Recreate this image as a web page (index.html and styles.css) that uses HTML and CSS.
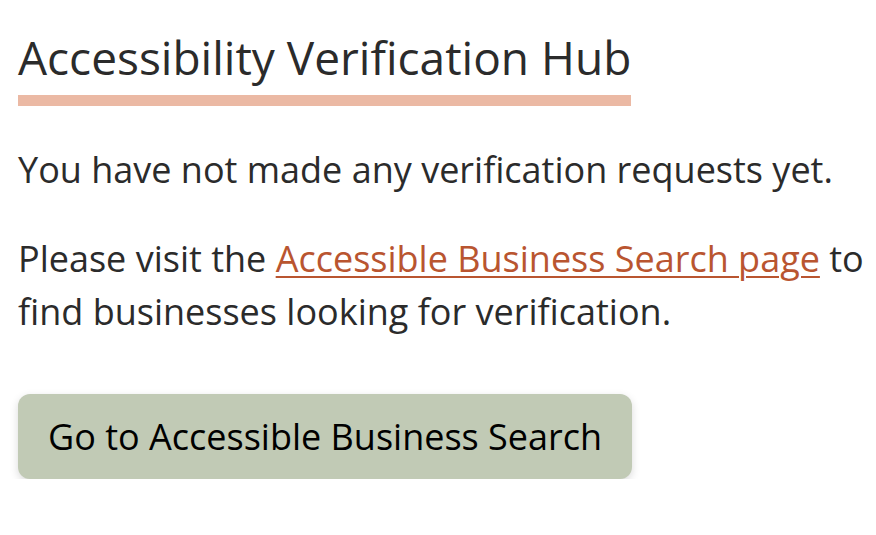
FILE: index.html
```html
<!DOCTYPE html>
<html lang="en">
<head>
<meta charset="utf-8">
<title>Accessibility Verification Hub</title>
<link rel="stylesheet" href="styles.css">
</head>
<body>
<main class="hub">
  <h1 class="hub-title">Accessibility Verification Hub</h1>
  <p class="hub-text">You have not made any verification requests yet.</p>
  <p class="hub-text">Please visit the <a class="hub-link" href="#">Accessible Business Search page</a> to find businesses looking for verification.</p>
  <a class="hub-button" href="#">Go to Accessible Business Search</a>
</main>
</body>
</html>
```
FILE: styles.css
```css
html, body {
  margin: 0;
  padding: 0;
  background: #ffffff;
}
body {
  font-family: "Open Sans", "Noto Sans", sans-serif;
  color: #2b2b2b;
}
.hub {
  padding: 27px 6px 0 18px;
  display: flex;
  flex-direction: column;
  align-items: flex-start;
}
.hub-title {
  font-size: 46px;
  font-weight: 400;
  line-height: 60px;
  margin: 0 0 37px 0;
  padding-bottom: 8px;
  border-bottom: 11px solid #ebb9a4;
}
.hub-text {
  font-size: 36px;
  line-height: 53px;
  margin: 0 0 36px 0;
}
.hub-link {
  color: #b95530;
  text-decoration: underline;
  text-decoration-thickness: 2px;
  text-underline-offset: 4px;
}
.hub-button {
  display: inline-block;
  background: #c1cab5;
  color: #000000;
  text-decoration: none;
  font-size: 36px;
  line-height: 85px;
  padding: 0 30px;
  border-radius: 12px;
  box-shadow: 0 3px 8px rgba(0, 0, 0, 0.15);
  margin-top: 20px;
}
```
